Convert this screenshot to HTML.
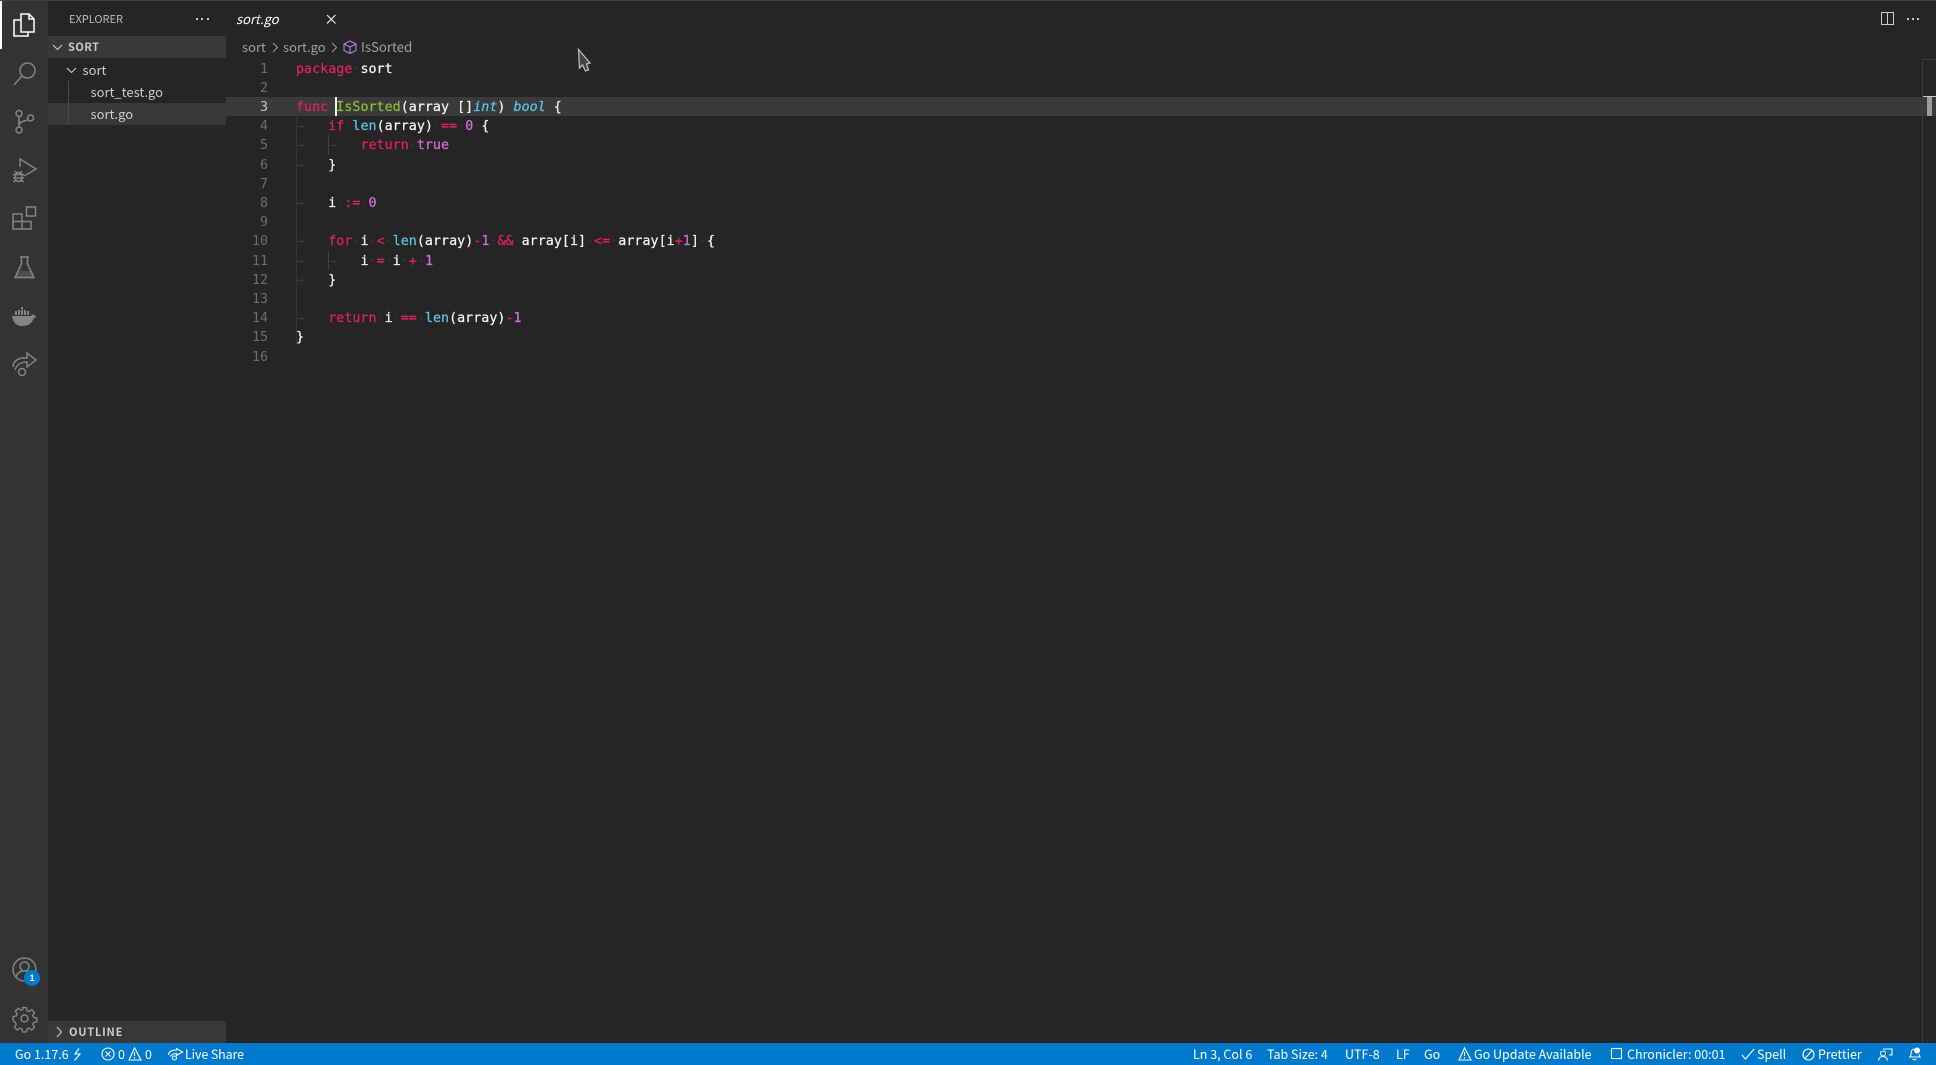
<!DOCTYPE html>
<html><head><meta charset="utf-8">
<style>
*{box-sizing:border-box}
html,body{margin:0;padding:0;width:1936px;height:1065px;overflow:hidden;background:#252525}
body{position:relative;font-family:"Noto Sans CJK JP","Liberation Sans",sans-serif;color:#ccc}
.a{position:absolute;white-space:pre}
.ln{position:absolute;left:226px;width:42px;text-align:right;font:13.33px/19.2px "DejaVu Sans Mono",monospace;color:#6e6e6e;margin-top:1px}
.c{position:absolute;left:296px;font:13.33px/19.2px "DejaVu Sans Mono",monospace;color:#f8f8f2;white-space:pre;letter-spacing:.03px;margin-top:1px;-webkit-text-stroke:.2px currentColor}
.k{color:#e6215f}.f{color:#8cc22b}.b{color:#5cc8e6}.n{color:#d86fdc}.t{color:#5cc8e6;font-style:italic}.w{color:#3a3a3a;-webkit-text-stroke:0}.o{color:#e6215f}
.s{position:absolute;top:1043px;height:22px;line-height:21px;font-size:12.5px;color:#fff;white-space:pre}
svg{position:absolute;overflow:visible}
.i{fill:none;stroke:#858585;stroke-width:1.5}
.u{fill:none;stroke:#fff;stroke-width:1.1}
</style></head><body>
<div class="a" style="left:0;top:0;width:1936px;height:1px;background:#37474f"></div>
<div class="a" style="left:0;top:1px;width:48px;height:1042px;background:#333"></div>
<div class="a" style="left:0;top:1px;width:2px;height:48px;background:#fff"></div>
<div class="a" style="left:48px;top:1px;width:178px;height:1042px;background:#252525"></div>

<!-- activity icons -->
<svg style="left:12px;top:12px" width="24" height="26" viewBox="0 0 24 26"><path d="M9 2h8l5 5v13H9z M17 2v5h5" fill="none" stroke="#fff" stroke-width="1.5"/><path d="M9 8H2v16h14v-4" fill="none" stroke="#fff" stroke-width="1.5"/></svg>
<svg style="left:13px;top:61px" width="24" height="25" viewBox="0 0 24 25"><circle cx="14.5" cy="9.5" r="7.5" class="i"/><path d="M9 15L1 24" class="i"/></svg>
<svg style="left:14px;top:109px" width="21" height="25" viewBox="0 0 21 25"><circle cx="5" cy="4.5" r="3" class="i"/><circle cx="5" cy="21" r="3" class="i"/><circle cx="16.5" cy="9" r="3" class="i"/><path d="M5 7.500V18M5 17c0-3 2-4 5-5 3-.7 4-1 4.500-1.500" class="i"/></svg>
<svg style="left:12px;top:158px" width="25" height="25" viewBox="0 0 25 25"><path d="M8 9V1l16 10-12 7" class="i"/><ellipse cx="6.500" cy="19" rx="3.500" ry="4.500" class="i"/><path d="M1 16.500h11M1 20h11M1.500 24l2.500-2M11.500 24l-2.500-2M3 13l2 2M10 13l-2 2" class="i"/></svg>
<svg style="left:12px;top:206px" width="25" height="25" viewBox="0 0 25 25"><path d="M1 8h9v15H1zM1 15.500h18V23H10M10 8v7.500h9V23" class="i"/><rect x="14.500" y="1" width="9" height="9" class="i"/></svg>
<svg style="left:14px;top:256px" width="21" height="23" viewBox="0 0 21 23"><path d="M6 1h9M7.500 1v7L1 21.500h19L13.500 8V1" class="i"/><path d="M4.500 15h12l3 6.500H1.500z" fill="#85858555" stroke="none"/></svg>
<svg style="left:12px;top:307px" width="25" height="20" viewBox="0 0 25 20"><path d="M0 9h19c1-2 2-2 3-1l2.500 2-3 1.500c-1.500 5-6 7.500-11 7.500C4 19 1 15.500 0 9z" fill="#858585"/><path d="M3 4h2v4H3zM6 3h2v5H6zM9 3h2v5H9zM12 3h2v5h-2zM9 0h2v2.500H9zM15 4h2v4h-2z" fill="#858585"/></svg>
<svg style="left:12px;top:352px" width="25" height="26" viewBox="0 0 25 26"><path d="M1 15c0-6 6-10 14-9V1l9 7-9 7v-5c-6 0-10 2-12 8" class="i"/><circle cx="10" cy="20" r="3.500" class="i"/></svg>
<svg style="left:12px;top:957px" width="25" height="25" viewBox="0 0 25 25"><circle cx="12.500" cy="12.500" r="11.500" class="i"/><circle cx="12.500" cy="9.500" r="4.500" class="i"/><path d="M4 20c1.500-5 5-6 8.500-6s7 1 8.500 6" class="i"/></svg>
<div class="a" style="left:24px;top:970px;width:16px;height:16px;border-radius:50%;background:#007acc;color:#fff;font:bold 9px/16px 'Liberation Sans',sans-serif;text-align:center">1</div>
<svg style="left:12px;top:1006px" width="25" height="25" viewBox="0 0 25 25"><circle cx="12.500" cy="12.500" r="3.500" class="i"/><path d="M10.500 1h4l.7 3.400 2 .9 3-1.900 2.900 2.900-1.900 3 .9 2 3.400.7v4l-3.400.7-.9 2 1.900 3-2.900 2.900-3-1.900-2 .9-.7 3.100h-4l-.7-3.100-2-.9-3 1.900-2.900-2.900 1.900-3-.9-2L.5 14.500v-4l3.400-.7.9-2-1.900-3 2.900-2.900 3 1.900 2-.9z" class="i" transform="translate(.6 .6) scale(.95)"/></svg>

<!-- sidebar -->
<div class="a" style="left:69px;top:11px;font-size:11px;line-height:16px;color:#bbb">EXPLORER</div>
<div class="a" style="left:196px;top:18px;width:2px;height:2px;background:#ccc"></div>
<div class="a" style="left:201px;top:18px;width:2px;height:2px;background:#ccc"></div>
<div class="a" style="left:207px;top:18px;width:2px;height:2px;background:#ccc"></div>
<div class="a" style="left:48px;top:36px;width:178px;height:22px;background:#383838"></div>
<svg style="left:52px;top:44px" width="11" height="7"><path d="M1 1l4.500 4.500L10 1" fill="none" stroke="#ccc" stroke-width="1.100"/></svg>
<div class="a" style="left:68px;top:38px;font-size:11px;font-weight:700;line-height:18px;color:#ccc;letter-spacing:.5px">SORT</div>
<svg style="left:66px;top:67px" width="11" height="7"><path d="M1 1l4.500 4.500L10 1" fill="none" stroke="#ccc" stroke-width="1.100"/></svg>
<div class="a" style="left:82.500px;top:60px;font-size:13px;line-height:20px;color:#ccc">sort</div>
<div class="a" style="left:48px;top:103px;width:178px;height:22px;background:#383838"></div>
<div class="a" style="left:68px;top:81px;width:1px;height:44px;background:#4a4a4a"></div>
<div class="a" style="left:90.500px;top:82px;font-size:13px;line-height:20px;color:#ccc">sort_test.go</div>
<div class="a" style="left:90.500px;top:104px;font-size:13px;line-height:20px;color:#ccc">sort.go</div>
<div class="a" style="left:48px;top:1021px;width:178px;height:22px;background:#383838"></div>
<svg style="left:56px;top:1026px" width="7" height="12"><path d="M1 1l4.500 5L1 11" fill="none" stroke="#ccc" stroke-width="1.100"/></svg>
<div class="a" style="left:69px;top:1023px;font-size:11px;font-weight:700;line-height:18px;color:#ccc;letter-spacing:.8px">OUTLINE</div>

<!-- tab -->
<div class="a" style="left:236px;top:9px;font-size:13px;font-style:italic;line-height:20px;color:#fff">sort.go</div>
<svg style="left:326px;top:14px" width="11" height="11"><path d="M1 1l8.500 8.500M9.500 1L1 9.500" stroke="#eee" stroke-width="1.200"/></svg>
<svg style="left:1881px;top:12px" width="14" height="14"><rect x=".5" y=".5" width="12" height="12" fill="none" stroke="#ccc"/><path d="M6.500 1v12" stroke="#ccc"/></svg>
<div class="a" style="left:1907px;top:18px;width:2px;height:2px;background:#ccc"></div>
<div class="a" style="left:1912px;top:18px;width:2px;height:2px;background:#ccc"></div>
<div class="a" style="left:1917px;top:18px;width:2px;height:2px;background:#ccc"></div>

<!-- breadcrumb -->
<div class="a" style="left:242px;top:37px;font-size:13px;line-height:20px;color:#a0a0a0">sort</div>
<svg style="left:272px;top:42px" width="7" height="11"><path d="M1 1l4.500 4.500L1 10" fill="none" stroke="#a0a0a0"/></svg>
<div class="a" style="left:283px;top:37px;font-size:13px;line-height:20px;color:#a0a0a0">sort.go</div>
<svg style="left:331px;top:42px" width="7" height="11"><path d="M1 1l4.500 4.500L1 10" fill="none" stroke="#a0a0a0"/></svg>
<svg style="left:343px;top:40px" width="14" height="14"><path d="M7 1l6 3v6.500l-6 3-6-3V4zM1 4l6 3 6-3M7 7v6.500" fill="none" stroke="#b180d7" stroke-width="1.100"/></svg>
<div class="a" style="left:361px;top:37px;font-size:13.2px;line-height:20px;color:#a0a0a0">IsSorted</div>

<!-- editor -->
<div class="a" style="left:226px;top:97px;width:1710px;height:19px;background:#3a3a3a"></div>
<div class="a" style="left:1922px;top:59px;width:1px;height:984px;background:#3a3a3a"></div>
<div class="a" style="left:1922px;top:59px;width:14px;height:1px;background:#3a3a3a"></div>
<div class="a" style="left:1923px;top:96px;width:13px;height:1px;background:#c8c8c8"></div>
<div class="a" style="left:1927px;top:97px;width:5px;height:19px;background:#9a9a9a"></div>
<div class="a" style="left:296px;top:116px;width:1px;height:230px;background:#353535"></div>
<div class="a" style="left:328px;top:135px;width:1px;height:20px;background:#3f3f3f"></div>
<div class="a" style="left:328px;top:251px;width:1px;height:19px;background:#3f3f3f"></div>

<div class="ln" style="top:59px">1</div>
<div class="ln" style="top:78px">2</div>
<div class="ln" style="top:97px;color:#c6c6c6">3</div>
<div class="ln" style="top:116px">4</div>
<div class="ln" style="top:135px">5</div>
<div class="ln" style="top:155px">6</div>
<div class="ln" style="top:174px">7</div>
<div class="ln" style="top:193px">8</div>
<div class="ln" style="top:212px">9</div>
<div class="ln" style="top:231px">10</div>
<div class="ln" style="top:251px">11</div>
<div class="ln" style="top:270px">12</div>
<div class="ln" style="top:289px">13</div>
<div class="ln" style="top:308px">14</div>
<div class="ln" style="top:327px">15</div>
<div class="ln" style="top:347px">16</div>

<div class="c" style="top:59px"><span class="k">package</span><span class="w">·</span>sort</div>
<div class="c" style="top:97px"><span class="k">func</span><span class="w">·</span><span class="f">IsSorted</span>(array<span class="w">·</span>[]<span class="t">int</span>)<span class="w">·</span><span class="t">bool</span><span class="w">·</span>{</div>
<div class="c" style="top:116px"><span class="w">→   </span><span class="k">if</span><span class="w">·</span><span class="b">len</span>(array)<span class="w">·</span><span class="o">==</span><span class="w">·</span><span class="n">0</span><span class="w">·</span>{</div>
<div class="c" style="top:135px"><span class="w">→   →   </span><span class="k">return</span><span class="w">·</span><span class="n">true</span></div>
<div class="c" style="top:155px"><span class="w">→   </span>}</div>
<div class="c" style="top:193px"><span class="w">→   </span>i<span class="w">·</span><span class="o">:=</span><span class="w">·</span><span class="n">0</span></div>
<div class="c" style="top:231px"><span class="w">→   </span><span class="k">for</span><span class="w">·</span>i<span class="w">·</span><span class="o">&lt;</span><span class="w">·</span><span class="b">len</span>(array)<span class="o">-</span><span class="n">1</span><span class="w">·</span><span class="o">&amp;&amp;</span><span class="w">·</span>array[i]<span class="w">·</span><span class="o">&lt;=</span><span class="w">·</span>array[i<span class="o">+</span><span class="n">1</span>]<span class="w">·</span>{</div>
<div class="c" style="top:251px"><span class="w">→   →   </span>i<span class="w">·</span><span class="o">=</span><span class="w">·</span>i<span class="w">·</span><span class="o">+</span><span class="w">·</span><span class="n">1</span></div>
<div class="c" style="top:270px"><span class="w">→   </span>}</div>
<div class="c" style="top:308px"><span class="w">→   </span><span class="k">return</span><span class="w">·</span>i<span class="w">·</span><span class="o">==</span><span class="w">·</span><span class="b">len</span>(array)<span class="o">-</span><span class="n">1</span></div>
<div class="c" style="top:327px">}</div>
<div class="a" style="left:335px;top:97px;width:2px;height:19px;background:#f0f0f0"></div>

<!-- mouse pointer -->
<svg style="left:577px;top:48px" width="15" height="24" viewBox="0 0 15 24"><path d="M1.500 1.500L13 15l-3.500 1 2 6-3 1-3-6-3 3z" transform="translate(0 0)" fill="#444" stroke="#bbb" stroke-width="1.300"/></svg>

<!-- status bar -->
<div class="a" style="left:0;top:1043px;width:1936px;height:22px;background:#007acc"></div>
<div class="s" style="left:15px">Go 1.17.6</div>
<svg style="left:73px;top:1048px" width="9" height="13"><path d="M6 .5L2 6h5L1.500 12.500" fill="none" stroke="#fff" stroke-width="1.100"/></svg>
<svg style="left:101px;top:1047px" width="14" height="14"><circle cx="7" cy="7" r="6" class="u"/><path d="M4.500 4.500l5 5M9.500 4.500l-5 5" class="u"/></svg>
<div class="s" style="left:118px">0</div>
<svg style="left:128px;top:1047px" width="14" height="14"><path d="M6.500 1L1 13h12zM6.500 5v4M6.500 10v1.500" class="u"/></svg>
<div class="s" style="left:145px">0</div>
<svg style="left:168px;top:1048px" width="15" height="13"><path d="M.5 7c0-3 3-5 8-5V.5l6 3.500-6 3.500V5.500c-3 0-5 1-6 3" class="u"/><circle cx="6.500" cy="10" r="2" class="u"/></svg>
<div class="s" style="left:185px;letter-spacing:-.12px">Live Share</div>

<div class="s" style="left:1193px">Ln 3, Col 6</div>
<div class="s" style="left:1267px">Tab Size: 4</div>
<div class="s" style="left:1345px">UTF-8</div>
<div class="s" style="left:1396px">LF</div>
<div class="s" style="left:1424px">Go</div>
<svg style="left:1458px;top:1047px" width="14" height="14"><path d="M6.500 1L1 13h12zM6.500 5v4M6.500 10v1.500" class="u"/></svg>
<div class="s" style="left:1474px">Go Update Available</div>
<svg style="left:1611px;top:1048px" width="12" height="12"><rect x=".5" y=".5" width="10" height="10" class="u"/></svg>
<div class="s" style="left:1627px">Chronicler: 00:01</div>
<svg style="left:1741px;top:1048px" width="14" height="12"><path d="M1 7l3.500 4L13 1" class="u"/></svg>
<div class="s" style="left:1757px">Spell</div>
<svg style="left:1802px;top:1048px" width="13" height="13"><circle cx="6.500" cy="6.500" r="5.500" class="u"/><path d="M3 10.500l7-8" class="u"/></svg>
<div class="s" style="left:1818px">Prettier</div>
<svg style="left:1878px;top:1048px" width="15" height="13"><path d="M5 1h9v6h-3M5.500 1" class="u"/><circle cx="5" cy="5.500" r="2.500" class="u"/><path d="M.5 12.500c.5-3 2.500-4 4.500-4s4 1 4.500 4" class="u"/></svg>
<svg style="left:1908px;top:1047px" width="13" height="14"><path d="M2 10c1-1 1-2 1-4 0-2 1.500-3.500 3-4M11 7c0 1.500 0 2 1 3H1M4.500 12c1 1 3 1 4 0" class="u"/><circle cx="9" cy="3.500" r="3" fill="#fff"/></svg>
</body></html>
